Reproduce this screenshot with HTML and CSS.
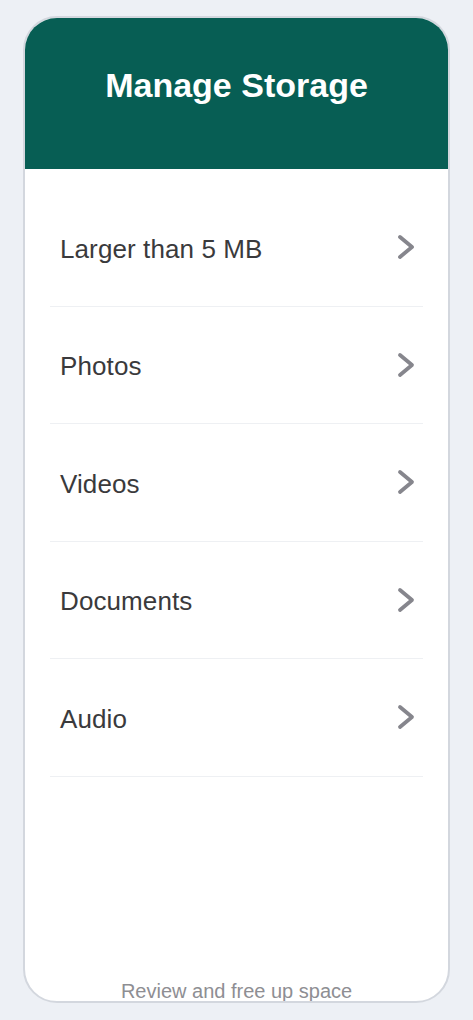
FILE: index.html
```html
<!DOCTYPE html>
<html>
    <head>
        <meta charset="utf-8" />
        <link rel="stylesheet" href="styles.css">
    </head>

    <body>
        <div class="card">
            <div class="header">
                <h1>Manage Storage</h1>
            </div>

            <ul class="list">
                <li class="row">
                    <span>Larger than 5 MB</span>
                    <svg class="chevron" viewBox="0 0 18 26"><path d="M3 3 L15 13 L3 23" /></svg>
                </li>
                <li class="row">
                    <span>Photos</span>
                    <svg class="chevron" viewBox="0 0 18 26"><path d="M3 3 L15 13 L3 23" /></svg>
                </li>
                <li class="row">
                    <span>Videos</span>
                    <svg class="chevron" viewBox="0 0 18 26"><path d="M3 3 L15 13 L3 23" /></svg>
                </li>
                <li class="row">
                    <span>Documents</span>
                    <svg class="chevron" viewBox="0 0 18 26"><path d="M3 3 L15 13 L3 23" /></svg>
                </li>
                <li class="row">
                    <span>Audio</span>
                    <svg class="chevron" viewBox="0 0 18 26"><path d="M3 3 L15 13 L3 23" /></svg>
                </li>
            </ul>

            <div class="footer">Review and free up space</div>
        </div>
    </body>
</html>
```

FILE: styles.css
```css
body {
    margin: 0;
    background: #edf0f5;
    font-family: "Liberation Sans", Arial, sans-serif;
}

.card {
    box-sizing: border-box;
    width: 427px;
    height: 987px;
    margin: 16px auto 0;
    background: #fff;
    border: 2px solid #d3d7de;
    border-radius: 34px;
    overflow: hidden;
    display: flex;
    flex-direction: column;
}

.header {
    box-sizing: border-box;
    height: 151px;
    padding-top: 47px;
    background: #075e54;
    text-align: center;
}

.header h1 {
    margin: 0;
    font-size: 34px;
    line-height: 40px;
    font-weight: bold;
    color: #fff;
}

.list {
    margin: 0;
    padding: 20px 25px 0;
    list-style: none;
}

.row {
    height: 116.5px;
    padding: 0 8px 0 10px;
    display: flex;
    align-items: center;
    justify-content: space-between;
    border-bottom: 1px solid #eef0f3;
    font-size: 26px;
    line-height: 30px;
    color: #3a3a3c;
}

.row span {
    padding-top: 3px;
    letter-spacing: 0.1px;
}

.chevron {
    width: 18px;
    height: 26px;
    fill: none;
    stroke: #86868d;
    stroke-width: 3.8;
    stroke-linecap: round;
    stroke-linejoin: round;
}

.footer {
    margin-top: auto;
    margin-bottom: -2px;
    text-align: center;
    font-size: 20px;
    line-height: 23px;
    color: #8e8e93;
}
```
